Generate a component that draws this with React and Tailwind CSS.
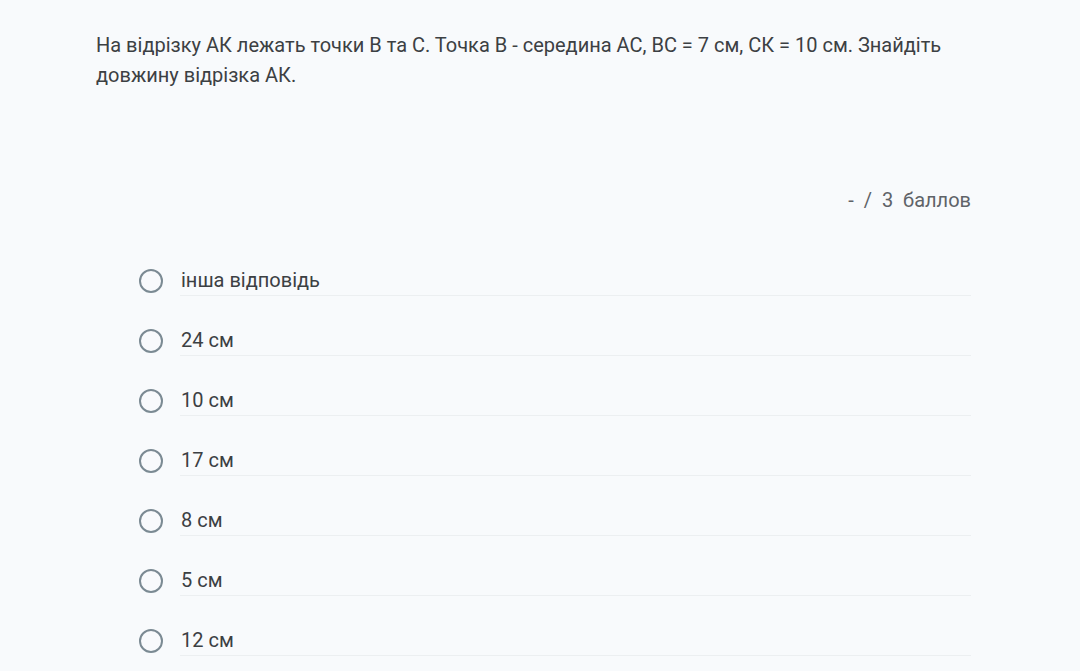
const options = ['інша відповідь', '24 см', '10 см', '17 см', '8 см', '5 см', '12 см'];

const App = () => {
  return (
    <main
      className="min-h-screen bg-[#f8fafc] text-[#202124]"
      style={{ fontFamily: 'Roboto, "Noto Sans", sans-serif' }}
    >
      <div className="ml-[96px] w-[875px] pt-[30px]">
        <p className="text-[20px] leading-[30px] text-[#3c4043]">
          На відрізку АК лежать точки В та С. Точка В - середина АС, ВС = 7 см, СК = 10 см. Знайдіть
          довжину відрізка АК.
        </p>

        <div className="mt-[95px] flex justify-end text-[20px] leading-[30px] text-[#5f6368]">
          <span className="whitespace-pre">-  /  3  баллов</span>
        </div>

        <div className="mt-[50px] flex flex-col gap-[29px]">
          {options.map((opt) => (
            <label key={opt} className="flex items-center pl-[43px]">
              <span className="h-[24px] w-[24px] shrink-0 rounded-full border-2 border-[#7b8a93]" />
              <span className="ml-[17px] flex-1 border-b border-[#eceff1] pl-[1px] text-[20px] leading-[30px] text-[#3c4043]">
                {opt}
              </span>
            </label>
          ))}
        </div>
      </div>
    </main>
  );
};

export default App;
